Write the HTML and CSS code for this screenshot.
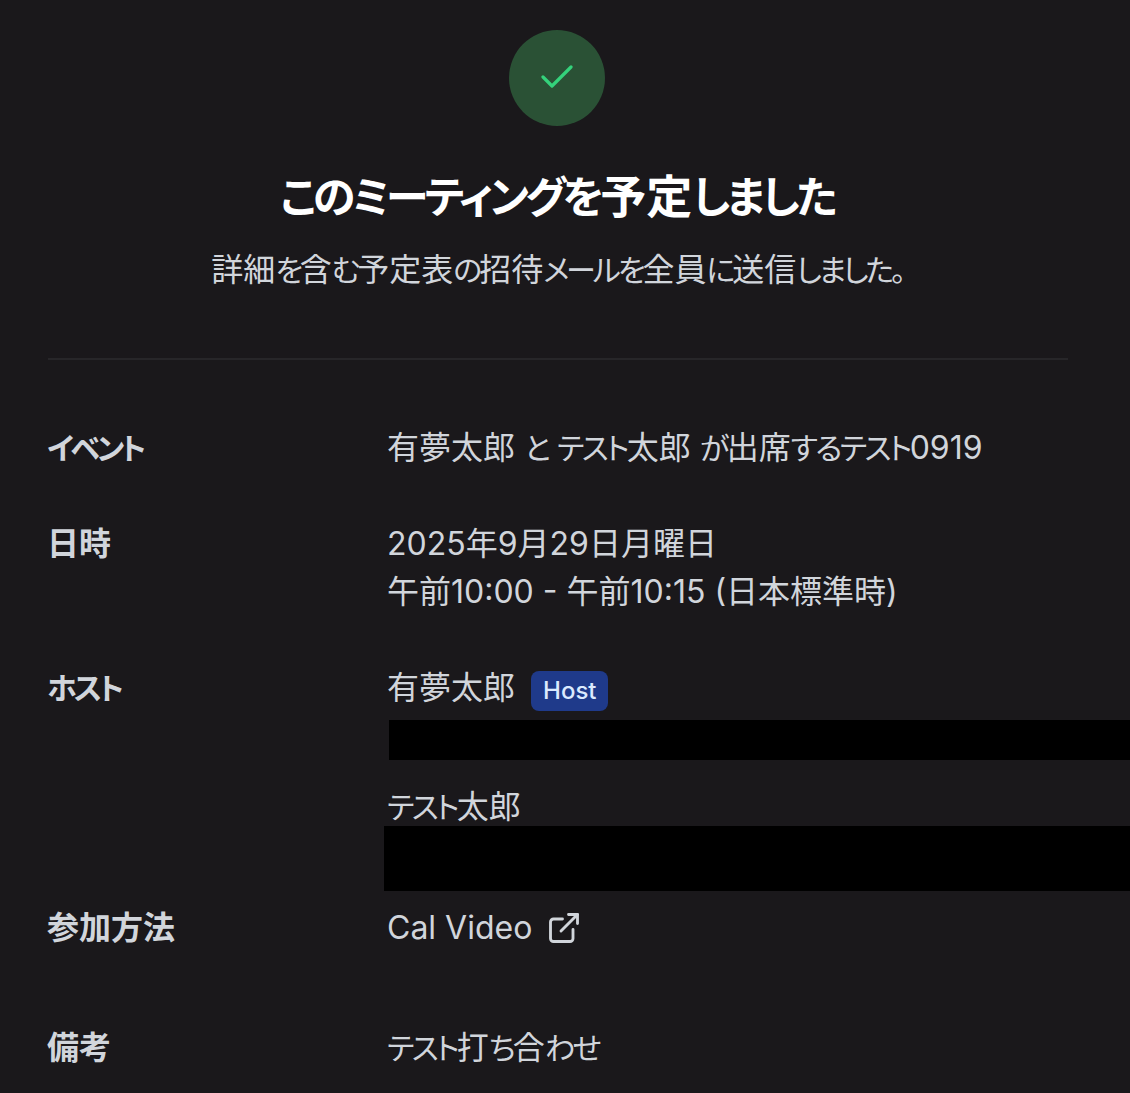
FILE: index.html
```html
<!DOCTYPE html>
<html lang="ja">
<head>
<meta charset="utf-8">
<title>予定</title>
<link rel="stylesheet" href="styles.css">
</head>
<body>
<main class="page">
  <header class="head">
    <div class="badge-check">
      <svg width="32" height="32" viewBox="0 0 32 32" fill="none" stroke="#34d27b" stroke-width="3.2" stroke-linecap="round" stroke-linejoin="round"><path d="M2 15 L11 24 L30 5"/></svg>
    </div>
    <h1 class="title"><span class="k">このミーティングを</span>予定<span class="k">しました</span></h1>
    <p class="sub">詳細<span class="k">を</span>含<span class="k">む</span>予定表<span class="k">の</span>招待<span class="k">メールを</span>全員<span class="k">に</span>送信<span class="k">しました。</span></p>
  </header>
  <hr class="rule">
  <section class="details">
    <div class="label"><span class="k">イベント</span></div>
    <div class="value">有夢太郎 <span class="k">と</span> <span class="k">テスト</span>太郎 <span class="k">が</span>出席<span class="k">するテスト</span>0919</div>
    <div class="label row-gap">日時</div>
    <div class="value row-gap">2025年9月29日月曜日<br>午前10:00 - 午前10:15 (日本標準時)</div>
    <div class="label row-gap"><span class="k">ホスト</span></div>
    <div class="value row-gap">
      <div class="person"><span>有夢太郎</span><span class="tag">Host</span></div>
      <div class="mask m1"></div>
      <div class="person p2"><span><span class="k">テスト</span>太郎</span></div>
      <div class="mask m2"></div>
    </div>
    <div class="label row-loc">参加方法</div>
    <div class="value row-loc loc"><span>Cal Video</span>
      <svg width="36" height="36" viewBox="0 0 24 24" fill="none" stroke="#d1d5db" stroke-width="1.9" stroke-linecap="round" stroke-linejoin="round"><path d="M18 13v6a2 2 0 0 1-2 2H5a2 2 0 0 1-2-2V8a2 2 0 0 1 2-2h6"/><path d="M15 3h6v6"/><path d="M10 14 21 3"/></svg>
    </div>
    <div class="label row-note">備考</div>
    <div class="value row-note"><span class="k">テスト</span>打<span class="k">ち</span>合<span class="k">わせ</span></div>
  </section>
</main>
</body>
</html>
```

FILE: styles.css
```css
* { box-sizing: border-box; }
html, body { margin: 0; height: 100%; }
body {
  background: #1a181b;
  color: #d1d5db;
  font-family: Inter, "Noto Sans CJK JP", sans-serif;
  font-feature-settings: "palt";
  overflow: hidden;
  height: 1093px;
}
.k { font-size: 0.94em; line-height: 1; letter-spacing: -0.085em; }
.page { padding: 30px 62px 0 48px; }
.head { display: flex; flex-direction: column; align-items: center; padding-right: 2px; }
.badge-check {
  width: 96px; height: 96px; border-radius: 50%;
  background: #2a5135;
  display: flex; align-items: center; justify-content: center;
}
.title {
  margin: 40px 0 0;
  font-size: 46px; line-height: 60px; font-weight: 600;
  color: #fff;
}
.sub { margin: 20px 0 0; font-size: 32px; line-height: 48px; color: #d1d5db; }
.sub .k { letter-spacing: -0.105em; }
.rule { margin: 64px 0 0; border: 0; border-top: 2px solid #272629; }
.details {
  display: grid;
  grid-template-columns: 340px 1fr;
  margin: 64px 0 0 -1px;
  font-size: 32px;
  line-height: 48px;
}
.label { font-weight: 600; color: #d1d5db; }
.label .k { letter-spacing: -0.11em; }
.value { min-width: 0; }
.row-gap { margin-top: 48px; }
.row-loc { margin-top: 13px; }
.row-note { margin-top: 72px; }
.person { display: flex; align-items: center; gap: 16px; }
.tag {
  background: #1f3a8a; color: #dbeafe;
  font-size: 24px; line-height: 40px; font-weight: 500;
  padding: 0 12px; border-radius: 8px;
  margin-top: 6px;
}
.mask { background: #000; margin-right: -62px; }
.m1 { height: 40px; margin-top: 8px; margin-left: 2px; }
.p2 { margin-top: 27px; height: 39px; }
.m2 { height: 65px; margin-left: -3px; }
.loc { display: flex; align-items: center; gap: 14px; }
```
